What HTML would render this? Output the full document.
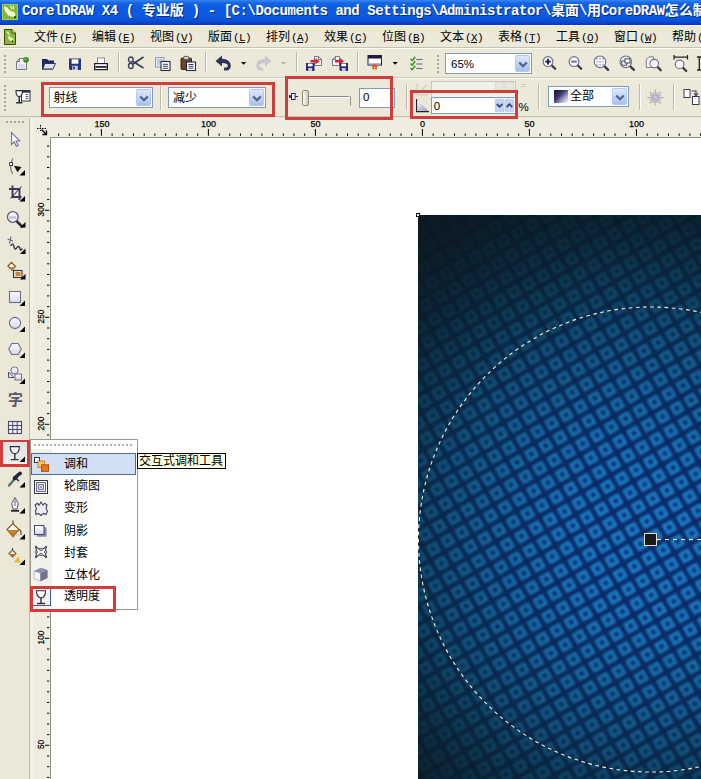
<!DOCTYPE html><html><head><meta charset="utf-8"><title>CorelDRAW X4</title><style>
*{box-sizing:border-box;margin:0;padding:0}
html,body{width:701px;height:779px;overflow:hidden;background:#ece9d8}
body{position:relative;font-family:"Liberation Sans","Noto Sans CJK SC",sans-serif;font-size:12px;color:#000}
.a{position:absolute}
.t{position:absolute;white-space:nowrap;line-height:1}
.rl{-webkit-text-stroke:0.25px #000}
.cj{font-family:"Liberation Sans","Noto Sans CJK SC",sans-serif}
#title{left:0;top:0;width:701px;height:25px;background:linear-gradient(#3a86f2 0,#1565e8 3px,#0b5be3 8px,#0b5ae0 17px,#0a4bd0 22px,#0838b8 25px)}
#title .t{color:#fff;font-family:"Liberation Mono","Noto Sans CJK SC",monospace;font-weight:bold;font-size:14px;letter-spacing:-0.42px;top:4px;left:22px;text-shadow:1px 1px 0 #0a2a80}
#title .t span{font-size:14px;letter-spacing:0}
.menu{top:31px;font-size:12px}
.menu i{font-style:normal;font-family:"Liberation Mono",monospace;font-size:11px;letter-spacing:-0.6px;margin-left:1px}
.sepv{position:absolute;width:2px;border-left:1px solid #bdbaab;border-right:1px solid #fbfaf5}
.combo{position:absolute;background:#fff;border:1px solid #7f9db9}
.dd{position:absolute;right:1px;top:1px;bottom:1px;width:15px;border-radius:2px;background:linear-gradient(#dfe8fb,#b9ccf6 70%,#a9bef0);border:1px solid #b5c7f3}
.red{position:absolute;border:3px solid #d23c3b}
.grip i{position:absolute;left:0;width:2px;height:2px;background:#aaa697}
</style></head><body>
<div id="title" class="a"><div class="t">CorelDRAW X4 ( <span>专业版</span> ) - [C:\Documents and Settings\Administrator\<span>桌面</span>\<span>用</span>CoreDRAW<span>怎么制</span></div></div>
<svg class="a" style="left:0;top:0" width="701" height="779" viewBox="0 0 701 779"><g transform="translate(2 4)"><rect width="16" height="16" fill="#86b530"/><rect x=".5" y=".5" width="15" height="15" fill="none" stroke="#a5cc55"/><path d="M2 2.5 Q5 2 6.5 5 L9 7.5 Q12 6.5 13 9.5 L13.5 13.5 L10 12.5 Q6 12.5 5 9.5 Q2.5 8 2 2.5Z" fill="#f4fbd8"/><path d="M8.5 1.5 L10 5.5 M11.5 2 L11.5 5.5" stroke="#e8f5c0" stroke-width="1.3"/><circle cx="13" cy="13.2" r="1.1" fill="#1d3a0a"/></g><g transform="translate(4 29)"><path d="M.5 .5 H8 L11.5 4 V15.5 H.5Z" fill="#8ab534" stroke="#3d4a12"/><path d="M8 .5 V4 H11.5" fill="#e8f0c8" stroke="#3d4a12"/><path d="M2 2.5 L5 6 L4 9 Q5 12 8 12.5 L10 13.5 L9.5 10 Q8 8 6 8 L4.5 3Z" fill="#eef8cc"/><circle cx="8.6" cy="12.2" r="1" fill="#1d3a0a"/></g></svg>
<div class="a" style="left:0;top:25px;width:701px;height:1px;background:#fbfaf6"></div>
<div class="t menu" style="left:34px">文件<i>(<u>F</u>)</i></div>
<div class="t menu" style="left:92px">编辑<i>(<u>E</u>)</i></div>
<div class="t menu" style="left:150px">视图<i>(<u>V</u>)</i></div>
<div class="t menu" style="left:208px">版面<i>(<u>L</u>)</i></div>
<div class="t menu" style="left:266px">排列<i>(<u>A</u>)</i></div>
<div class="t menu" style="left:324px">效果<i>(<u>C</u>)</i></div>
<div class="t menu" style="left:382px">位图<i>(<u>B</u>)</i></div>
<div class="t menu" style="left:440px">文本<i>(<u>X</u>)</i></div>
<div class="t menu" style="left:498px">表格<i>(<u>T</u>)</i></div>
<div class="t menu" style="left:556px">工具<i>(<u>O</u>)</i></div>
<div class="t menu" style="left:614px">窗口<i>(<u>W</u>)</i></div>
<div class="t menu" style="left:672px">帮助<i>(<u>H</u>)</i></div>

<div class="a" style="left:0;top:47px;width:701px;height:1px;background:#c5c2b2"></div>
<div class="a" style="left:0;top:48px;width:701px;height:1px;background:#fbfaf5"></div>
<div class="a grip" style="left:4px;top:55px"><i style="top:0px"></i><i style="top:4px"></i><i style="top:8px"></i><i style="top:12px"></i><i style="top:16px"></i></div>
<div class="sepv" style="left:118px;top:52px;height:20px"></div>
<div class="sepv" style="left:204.5px;top:52px;height:20px"></div>
<div class="sepv" style="left:296px;top:52px;height:20px"></div>
<div class="sepv" style="left:357px;top:52px;height:20px"></div>
<div class="a grip" style="left:437px;top:55px"><i style="top:0px"></i><i style="top:4px"></i><i style="top:8px"></i><i style="top:12px"></i><i style="top:16px"></i></div>
<div class="combo" style="left:445px;top:53px;width:87px;height:21px"><div class="t" style="left:5px;top:4.5px;font-size:11.5px">65%</div><div class="dd"><svg class="a" style="left:2px;top:5px" width="10" height="8" viewBox="0 0 10 8"><path d="M1.2 1.5 L5 5.3 L8.8 1.5" fill="none" stroke="#4d6185" stroke-width="2.2"/></svg></div></div>
<svg class="a" style="left:0;top:0" width="701" height="779" viewBox="0 0 701 779"><g transform="translate(16 58)"><path d="M.5 3.5 L3.5 .5 H10.5 V11.5 H.5Z" fill="#f2f2f4" stroke="#77778a"/><path d="M.5 3.5 H3.5 V.5" fill="none" stroke="#77778a"/><rect x="2" y="6" width="7" height="5" fill="#dcdce4"/><circle cx="10" cy="1.8" r="2.9" fill="#3b8f2e"/><circle cx="9.4" cy="1.2" r="1" fill="#7cc86a"/></g><g transform="translate(42 58)"><path d="M0 1 H5 L6.5 2.5 H12 V5 H0Z" fill="#1f2b5e"/><path d="M0 4 V11.5 H11 V4Z" fill="#1f2b5e"/><path d="M2.8 5.5 H13.5 L11 11 H.8Z" fill="#dfe2ee" stroke="#1f2b5e" stroke-width=".9"/></g><g transform="translate(69 58.5)"><path d="M0 0 H12 V11.5 H1.2 L0 10.3Z" fill="#2a3478"/><rect x="2.6" y=".8" width="6.8" height="4.4" fill="#fff"/><rect x="3.2" y="7.2" width="5.6" height="4.3" fill="#c9cde6"/><rect x="4.2" y="8" width="1.6" height="2.8" fill="#2a3478"/></g><g transform="translate(94 57.5)"><rect x="3.5" y=".5" width="7" height="6.5" fill="#fff" stroke="#8a8a9a"/><rect x=".6" y="6.1" width="12.8" height="6" fill="#fff" stroke="#1c1c2a" stroke-width="1.2"/><rect x="1.2" y="8.6" width="11.6" height="1.7" fill="#1c1c2a"/><rect x="2.5" y="6.7" width="9" height="1.2" fill="#d8d8e0"/></g><g transform="translate(128 56)"><path d="M5 8 L15.5 1 M5 5.5 L15.5 12" stroke="#3b3f62" stroke-width="1.7" fill="none"/><ellipse cx="2.8" cy="3.6" rx="2.3" ry="2.6" fill="none" stroke="#3b3f62" stroke-width="1.4"/><ellipse cx="2.8" cy="9.9" rx="2.3" ry="2.6" fill="none" stroke="#3b3f62" stroke-width="1.4"/></g><g transform="translate(155 57)"><rect x=".5" y=".5" width="8.5" height="9.5" fill="#dfe6f6" stroke="#8b9cc4"/><path d="M2 3H7.5M2 5H7.5M2 7H5" stroke="#8b9cc4" stroke-width=".8"/><rect x="6" y="4.5" width="9" height="9" fill="#fff" stroke="#262a48" stroke-width="1.1"/><path d="M8 7.3H13M8 9.3H13M8 11.3H13" stroke="#262a48" stroke-width=".9"/></g><g transform="translate(180.5 56)"><rect x=".5" y="2" width="10.5" height="11.5" rx="1" fill="#6a4626" stroke="#3c2814"/><rect x="3.2" y=".4" width="5" height="3" rx="1" fill="#d8d8e0" stroke="#555"/><rect x="6" y="6" width="9" height="8.5" fill="#fff" stroke="#262a48" stroke-width="1.1"/><path d="M8 8.5H13M8 10.3H13M8 12.2H13" stroke="#262a48" stroke-width=".9"/></g><g transform="translate(215.5 55.5)"><path d="M0 5.5 L6.5 0 V3.3 C11.5 3.3 15.3 6.2 15.3 10.3 C15.3 13.2 13.3 15 10.8 15 H8.6 V12 H10.4 C11.7 12 12.3 11.3 12.3 10.2 C12.3 8.6 10.5 7.6 6.5 7.6 V11Z" fill="#2c3060"/></g><path d="M241 62 h5.2 l-2.6 2.8z" fill="#000"/><g transform="translate(271.5 55.5)"><g transform="scale(-1 1)"><path d="M0 5.5 L6.5 0 V3.3 C11.5 3.3 15.3 6.2 15.3 10.3 C15.3 13.2 13.3 15 10.8 15 H8.6 V12 H10.4 C11.7 12 12.3 11.3 12.3 10.2 C12.3 8.6 10.5 7.6 6.5 7.6 V11Z" fill="#c6c6ce"/></g></g><path d="M281 62 h5.2 l-2.6 2.8z" fill="#b4b4b4"/><g transform="translate(306 56)"><path d="M8.5 .5 H12.5 L15.5 3.5 V9.5 H8.5Z" fill="#f4f4f8" stroke="#77778a"/><path d="M12.5 .5 V3.5 H15.5" fill="none" stroke="#77778a"/><path d="M4.5 4 H9.5 V2 L13.5 5.2 L9.5 8.4 V6.4 H4.5Z" fill="#d8262c"/><g transform="translate(0 7)"><path d="M0 0 H8.5 V8 H.9 L0 7.1Z" fill="#23296a"/><rect x="1.8" y=".6" width="4.8" height="2.8" fill="#fff"/><rect x="2.2" y="5" width="4" height="3" fill="#c4c8e2"/></g></g><g transform="translate(332 56)"><path d="M.5 3.5 L3.5 .5 H7.5 V9.5 H.5Z" fill="#f4f4f8" stroke="#77778a"/><path d="M.5 3.5 H3.5 V.5" fill="none" stroke="#77778a"/><path d="M3 4 H8 V2 L12 5.2 L8 8.4 V6.4 H3Z" fill="#d8262c"/><g transform="translate(7.5 7)"><path d="M0 0 H8.5 V8 H.9 L0 7.1Z" fill="#23296a"/><rect x="1.8" y=".6" width="4.8" height="2.8" fill="#fff"/><rect x="2.2" y="5" width="4" height="3" fill="#c4c8e2"/></g></g><g transform="translate(367.5 55)"><rect x=".5" y=".5" width="13.5" height="9.5" fill="#fff" stroke="#1c1c3c"/><rect x=".5" y=".5" width="13.5" height="3" fill="#1c1c3c"/><rect x="1" y="8.3" width="12.5" height="1.5" fill="#9a9ab8"/><path d="M7.2 9 L10.5 12.2 L9 12.5 L9.3 15 L7.2 13.8 L5.1 15 L5.4 12.5 L3.9 12.2Z" fill="#e8481c"/><path d="M7.2 11 L8.4 12.6 L7.2 14 L6 12.6Z" fill="#ffb534"/></g><path d="M392.6 62 h5.2 l-2.6 2.8z" fill="#000"/><g transform="translate(410 56)"><path d="M.5 3.0 L2.2 4.7 L5.2 0.7" fill="none" stroke="#3a9030" stroke-width="1.5"/><path d="M6.2 3.5 H12.5" stroke="#6a6a82" stroke-width="1.1"/><path d="M.5 7.5 L2.2 9.2 L5.2 5.2" fill="none" stroke="#3a9030" stroke-width="1.5"/><path d="M6.2 8 H12.5" stroke="#6a6a82" stroke-width="1.1"/><path d="M.5 12.0 L2.2 13.7 L5.2 9.7" fill="none" stroke="#3a9030" stroke-width="1.5"/><path d="M6.2 12.5 H12.5" stroke="#6a6a82" stroke-width="1.1"/></g><path d="M551.43 65.03 L555.1999999999999 68.8" stroke="#3a3844" stroke-width="2.3" stroke-linecap="round"/><circle cx="548" cy="61.6" r="4.9" fill="#f8f8fc" stroke="#6e6e8c" stroke-width="1.15"/><path d="M545.2 61.6 h5.6 M548 58.8 v5.6" stroke="#1c2050" stroke-width="1.9"/><path d="M577.43 65.03 L581.1999999999999 68.8" stroke="#3a3844" stroke-width="2.3" stroke-linecap="round"/><circle cx="574" cy="61.6" r="4.9" fill="#f8f8fc" stroke="#6e6e8c" stroke-width="1.15"/><path d="M571.2 61.6 h5.6" stroke="#6a6a8a" stroke-width="1.9"/><path d="M604.06 65.86 L608.0999999999999 69.89999999999999" stroke="#3a3844" stroke-width="2.3" stroke-linecap="round"/><circle cx="600" cy="61.8" r="5.8" fill="#f8f8fc" stroke="#6e6e8c" stroke-width="1.15"/><rect x="596.5" y="58.3" width="1.1" height="1.1" fill="#5a5a78"/><rect x="596.5" y="61.3" width="1.1" height="1.1" fill="#5a5a78"/><rect x="596.5" y="64.3" width="1.1" height="1.1" fill="#5a5a78"/><rect x="599.5" y="58.3" width="1.1" height="1.1" fill="#5a5a78"/><rect x="599.5" y="61.3" width="1.1" height="1.1" fill="#5a5a78"/><rect x="599.5" y="64.3" width="1.1" height="1.1" fill="#5a5a78"/><rect x="602.5" y="58.3" width="1.1" height="1.1" fill="#5a5a78"/><rect x="602.5" y="61.3" width="1.1" height="1.1" fill="#5a5a78"/><rect x="602.5" y="64.3" width="1.1" height="1.1" fill="#5a5a78"/><path d="M629.8599999999999 65.86 L633.8999999999999 69.89999999999999" stroke="#3a3844" stroke-width="2.3" stroke-linecap="round"/><circle cx="625.8" cy="61.8" r="5.8" fill="#f8f8fc" stroke="#6e6e8c" stroke-width="1.15"/><rect x="621.8" y="61" width="5" height="4.2" fill="#fff" stroke="#33334f" stroke-width=".9"/><rect x="625" y="58.8" width="5" height="4.2" fill="#fff" stroke="#33334f" stroke-width=".9"/><path d="M646.3 59.5 L649 56.8 H653.5 V67.5 H646.3Z" fill="#f2f2f6" stroke="#6e6e88" stroke-width=".9"/><path d="M657.21 66.61 L660.8 70.2" stroke="#3a3844" stroke-width="2.3" stroke-linecap="round"/><circle cx="654.2" cy="63.6" r="4.3" fill="#f8f8fc" stroke="#6e6e8c" stroke-width="1.15"/><path d="M674 57.2 H687.5 M674 55 V59.4 M687.5 55 V59.4" stroke="#222" stroke-width="1.2"/><path d="M682.61 67.41000000000001 L686.1999999999999 71.0" stroke="#3a3844" stroke-width="2.3" stroke-linecap="round"/><circle cx="679.6" cy="64.4" r="4.3" fill="#f8f8fc" stroke="#6e6e8c" stroke-width="1.15"/><path d="M699.3 57 V70 M697 57 H701 M697 70 H701" stroke="#222" stroke-width="1.3"/></svg>
<div class="a" style="left:0;top:77px;width:701px;height:1px;background:#cfccbd"></div>
<div class="a" style="left:0;top:78px;width:701px;height:1px;background:#fbfaf5"></div>
<div class="a grip" style="left:4px;top:85px"><i style="top:0px"></i><i style="top:4px"></i><i style="top:8px"></i><i style="top:12px"></i><i style="top:16px"></i><i style="top:20px"></i><i style="top:24px"></i></div>
<div class="combo" style="left:48.5px;top:86.5px;width:104px;height:21.5px"><div class="t" style="left:4px;top:4px">射线</div><div class="dd"><svg class="a" style="left:2px;top:5px" width="10" height="8" viewBox="0 0 10 8"><path d="M1.2 1.5 L5 5.3 L8.8 1.5" fill="none" stroke="#4d6185" stroke-width="2.2"/></svg></div></div>
<div class="sepv" style="left:159.5px;top:84px;height:26px"></div>
<div class="combo" style="left:168px;top:86.5px;width:97.8px;height:21.5px"><div class="t" style="left:4px;top:4px">减少</div><div class="dd"><svg class="a" style="left:2px;top:5px" width="10" height="8" viewBox="0 0 10 8"><path d="M1.2 1.5 L5 5.3 L8.8 1.5" fill="none" stroke="#4d6185" stroke-width="2.2"/></svg></div></div>
<div class="a" style="left:308px;top:96px;width:41px;height:1px;background:#8a8a86"></div><div class="a" style="left:308px;top:97px;width:41px;height:1px;background:#fff"></div>
<div class="a" style="left:350px;top:96px;width:1px;height:10px;background:#9a9a96"></div>
<div class="a" style="left:301.5px;top:90px;width:7px;height:16px;border:1px solid #8a8c7c;border-radius:2px;background:linear-gradient(90deg,#fff,#e0decf 60%,#c8c6b4)"></div>
<div class="combo" style="left:359px;top:88px;width:36px;height:19.6px"><div class="t" style="left:3px;top:3px;font-size:11.5px">0</div></div>
<div class="sepv" style="left:406px;top:84px;height:26px"></div>
<div class="combo" style="left:431px;top:81px;width:84.5px;height:17px;border-color:#c3c8d0;background:#f3f2ea"></div>
<div class="combo" style="left:431px;top:97px;width:84.5px;height:17px;border-color:#7f9db9"><div class="t" style="left:1.8px;top:2.8px;font-size:11.5px">0</div></div>
<div class="t" style="left:518.5px;top:101.5px;font-size:11.5px">%</div>
<div class="sepv" style="left:538px;top:84px;height:26px"></div>
<div class="combo" style="left:548px;top:86px;width:81px;height:21px"><div class="a" style="left:5px;top:3px;width:14px;height:13px;background:linear-gradient(135deg,#15103a 0,#3a3568 40%,#b8b4d8 75%,#fff 100%)"></div><div class="t" style="left:21px;top:3px">全部</div><div class="dd"><svg class="a" style="left:2px;top:5px" width="10" height="8" viewBox="0 0 10 8"><path d="M1.2 1.5 L5 5.3 L8.8 1.5" fill="none" stroke="#4d6185" stroke-width="2.2"/></svg></div></div>
<div class="sepv" style="left:638.5px;top:84px;height:26px"></div>
<div class="sepv" style="left:673px;top:84px;height:26px"></div>
<svg class="a" style="left:0;top:0" width="701" height="779" viewBox="0 0 701 779"><g transform="translate(15 90)"><rect x="6.5" y=".5" width="8.5" height="10.5" fill="#fff" stroke="#33334a"/><rect x="6.5" y=".5" width="8.5" height="2.2" fill="#33334a"/><path d="M10.5 4.6H13.3M10.5 6.6H13.3M10.5 8.6H13.3" stroke="#55556e" stroke-width="1"/><path d="M1 .6 H7.4 C7.6 4.2 6.3 6.3 4.2 6.8 C2.1 6.3 .8 4.2 1 .6Z" fill="#f6f6fa" stroke="#26263a" stroke-width="1.1"/><path d="M4.2 6.8 V12.3 M1.2 12.8 H7.4" stroke="#26263a" stroke-width="1.4"/></g><g transform="translate(289 92)"><path d="M0 4.5 H9" stroke="#2a2a5a" stroke-width="1"/><rect x="2.5" y="1.5" width="3.6" height="6" fill="#fff" stroke="#2a2a5a"/><rect x="0" y="3" width="1.6" height="3" fill="#2a2a5a"/></g><path d="M417 95 V83.5 M417 95 H428 M419 93 L427 84.5" stroke="#cfcdc0" stroke-width="1.2" fill="none"/><defs><linearGradient id="tg" x1="0" y1="0" x2="1" y2="1"><stop offset="0" stop-color="#fff"/><stop offset=".5" stop-color="#c9c9dc"/><stop offset="1" stop-color="#8d8db0"/></linearGradient></defs><path d="M416.6 99 V111.6 H429" fill="none" stroke="#222238" stroke-width="1.2"/><path d="M417.6 100.5 L428.2 110.8 H417.6Z" fill="url(#tg)"/><rect x="495.2" y="99.2" width="8.8" height="12.6" rx="1" fill="#c6d4f4" stroke="#aebfe8" stroke-width=".6"/><rect x="505" y="99.2" width="8.8" height="12.6" rx="1" fill="#c6d4f4" stroke="#aebfe8" stroke-width=".6"/><path d="M496.8 104 L499.6 106.8 L502.4 104" fill="none" stroke="#33477a" stroke-width="1.8"/><path d="M506.6 107 L509.4 104.2 L512.2 107" fill="none" stroke="#33477a" stroke-width="1.8"/><rect x="495.2" y="82.5" width="8.8" height="7" fill="#e9e7dc" stroke="#d6d4c8" stroke-width=".6"/><rect x="505" y="82.5" width="8.8" height="7" fill="#e9e7dc" stroke="#d6d4c8" stroke-width=".6"/><path d="M521 84.5 h5 M521 86.5 h5" stroke="#cfcdc0" stroke-width="1"/><path d="M655.3 97.6 L663.3 97.6" stroke="#a9a9b9" stroke-width="1.1"/><path d="M655.3 97.6 L660.8 99.9" stroke="#a9a9b9" stroke-width="1.1"/><path d="M655.3 97.6 L661.0 103.3" stroke="#a9a9b9" stroke-width="1.1"/><path d="M655.3 97.6 L657.6 103.1" stroke="#a9a9b9" stroke-width="1.1"/><path d="M655.3 97.6 L655.3 105.6" stroke="#a9a9b9" stroke-width="1.1"/><path d="M655.3 97.6 L653.0 103.1" stroke="#a9a9b9" stroke-width="1.1"/><path d="M655.3 97.6 L649.6 103.3" stroke="#a9a9b9" stroke-width="1.1"/><path d="M655.3 97.6 L649.8 99.9" stroke="#a9a9b9" stroke-width="1.1"/><path d="M655.3 97.6 L647.3 97.6" stroke="#a9a9b9" stroke-width="1.1"/><path d="M655.3 97.6 L649.8 95.3" stroke="#a9a9b9" stroke-width="1.1"/><path d="M655.3 97.6 L649.6 91.9" stroke="#a9a9b9" stroke-width="1.1"/><path d="M655.3 97.6 L653.0 92.1" stroke="#a9a9b9" stroke-width="1.1"/><path d="M655.3 97.6 L655.3 89.6" stroke="#a9a9b9" stroke-width="1.1"/><path d="M655.3 97.6 L657.6 92.1" stroke="#a9a9b9" stroke-width="1.1"/><path d="M655.3 97.6 L661.0 91.9" stroke="#a9a9b9" stroke-width="1.1"/><path d="M655.3 97.6 L660.8 95.3" stroke="#a9a9b9" stroke-width="1.1"/><circle cx="655.3" cy="97.6" r="2.2" fill="#c5c5d0"/><g transform="translate(683.5 88)"><rect x=".5" y="1.5" width="6" height="8" fill="#fff" stroke="#3a3a55"/><rect x="9" y="8.5" width="6.5" height="8" fill="#fff" stroke="#3a3a55"/><path d="M8 3 H12.5 V7" fill="none" stroke="#3a3a55" stroke-width="1.1"/><path d="M10.6 5.4 L12.5 7.6 L14.4 5.4" fill="none" stroke="#3a3a55" stroke-width="1.1"/></g></svg>
<div class="a" style="left:0;top:116px;width:701px;height:1px;background:#c2bfb0"></div>
<div class="a" style="left:0;top:118px;width:29px;height:661px;background:#ebe8d7"></div>
<div class="a" style="left:29px;top:118px;width:1px;height:661px;background:#bdb9a8"></div>
<div class="a" style="left:30px;top:118px;width:3px;height:661px;background:#f3f1e6"></div>
<div class="a grip" style="left:6px;top:121px"><i style="left:0px;top:0"></i><i style="left:4px;top:0"></i><i style="left:8px;top:0"></i><i style="left:12px;top:0"></i><i style="left:16px;top:0"></i></div>
<div class="a" style="left:33px;top:118px;width:668px;height:19px;background:#efede0"></div>
<div class="a" style="left:33px;top:137px;width:18px;height:642px;background:#efede0"></div>
<div class="a" style="left:50.4px;top:136.6px;width:651px;height:643px;background:#fff;border-left:1px solid #8f8f88;border-top:1px solid #8f8f88"></div>
<svg class="a" style="left:0;top:118px" width="701" height="661" viewBox="0 118 701 661" ><rect x="58.1" y="133.4" width="1" height="2.4" fill="#000"/><rect x="68.8" y="133.4" width="1" height="2.4" fill="#000"/><rect x="79.5" y="133.4" width="1" height="2.4" fill="#000"/><rect x="90.2" y="133.4" width="1" height="2.4" fill="#000"/><rect x="100.9" y="129" width="1" height="6.8" fill="#000"/><rect x="111.6" y="133.4" width="1" height="2.4" fill="#000"/><rect x="122.3" y="133.4" width="1" height="2.4" fill="#000"/><rect x="133.0" y="133.4" width="1" height="2.4" fill="#000"/><rect x="143.7" y="133.4" width="1" height="2.4" fill="#000"/><rect x="154.4" y="133.4" width="1" height="2.4" fill="#000"/><rect x="165.1" y="133.4" width="1" height="2.4" fill="#000"/><rect x="175.8" y="133.4" width="1" height="2.4" fill="#000"/><rect x="186.5" y="133.4" width="1" height="2.4" fill="#000"/><rect x="197.2" y="133.4" width="1" height="2.4" fill="#000"/><rect x="207.9" y="129" width="1" height="6.8" fill="#000"/><rect x="218.6" y="133.4" width="1" height="2.4" fill="#000"/><rect x="229.3" y="133.4" width="1" height="2.4" fill="#000"/><rect x="240.0" y="133.4" width="1" height="2.4" fill="#000"/><rect x="250.7" y="133.4" width="1" height="2.4" fill="#000"/><rect x="261.4" y="133.4" width="1" height="2.4" fill="#000"/><rect x="272.1" y="133.4" width="1" height="2.4" fill="#000"/><rect x="282.8" y="133.4" width="1" height="2.4" fill="#000"/><rect x="293.5" y="133.4" width="1" height="2.4" fill="#000"/><rect x="304.2" y="133.4" width="1" height="2.4" fill="#000"/><rect x="314.9" y="129" width="1" height="6.8" fill="#000"/><rect x="325.6" y="133.4" width="1" height="2.4" fill="#000"/><rect x="336.3" y="133.4" width="1" height="2.4" fill="#000"/><rect x="347.0" y="133.4" width="1" height="2.4" fill="#000"/><rect x="357.7" y="133.4" width="1" height="2.4" fill="#000"/><rect x="368.4" y="133.4" width="1" height="2.4" fill="#000"/><rect x="379.1" y="133.4" width="1" height="2.4" fill="#000"/><rect x="389.8" y="133.4" width="1" height="2.4" fill="#000"/><rect x="400.5" y="133.4" width="1" height="2.4" fill="#000"/><rect x="411.2" y="133.4" width="1" height="2.4" fill="#000"/><rect x="421.9" y="129" width="1" height="6.8" fill="#000"/><rect x="432.6" y="133.4" width="1" height="2.4" fill="#000"/><rect x="443.3" y="133.4" width="1" height="2.4" fill="#000"/><rect x="454.0" y="133.4" width="1" height="2.4" fill="#000"/><rect x="464.7" y="133.4" width="1" height="2.4" fill="#000"/><rect x="475.4" y="133.4" width="1" height="2.4" fill="#000"/><rect x="486.1" y="133.4" width="1" height="2.4" fill="#000"/><rect x="496.8" y="133.4" width="1" height="2.4" fill="#000"/><rect x="507.5" y="133.4" width="1" height="2.4" fill="#000"/><rect x="518.2" y="133.4" width="1" height="2.4" fill="#000"/><rect x="528.9" y="129" width="1" height="6.8" fill="#000"/><rect x="539.6" y="133.4" width="1" height="2.4" fill="#000"/><rect x="550.3" y="133.4" width="1" height="2.4" fill="#000"/><rect x="561.0" y="133.4" width="1" height="2.4" fill="#000"/><rect x="571.7" y="133.4" width="1" height="2.4" fill="#000"/><rect x="582.4" y="133.4" width="1" height="2.4" fill="#000"/><rect x="593.1" y="133.4" width="1" height="2.4" fill="#000"/><rect x="603.8" y="133.4" width="1" height="2.4" fill="#000"/><rect x="614.5" y="133.4" width="1" height="2.4" fill="#000"/><rect x="625.2" y="133.4" width="1" height="2.4" fill="#000"/><rect x="635.9" y="129" width="1" height="6.8" fill="#000"/><rect x="646.6" y="133.4" width="1" height="2.4" fill="#000"/><rect x="657.3" y="133.4" width="1" height="2.4" fill="#000"/><rect x="668.0" y="133.4" width="1" height="2.4" fill="#000"/><rect x="678.7" y="133.4" width="1" height="2.4" fill="#000"/><rect x="689.4" y="133.4" width="1" height="2.4" fill="#000"/><rect x="700.1" y="133.4" width="1" height="2.4" fill="#000"/><rect x="47" y="145.6" width="2.3" height="1" fill="#000"/><rect x="47" y="156.3" width="2.3" height="1" fill="#000"/><rect x="47" y="167.0" width="2.3" height="1" fill="#000"/><rect x="47" y="177.7" width="2.3" height="1" fill="#000"/><rect x="47" y="188.4" width="2.3" height="1" fill="#000"/><rect x="47" y="199.1" width="2.3" height="1" fill="#000"/><rect x="45" y="209.8" width="4.3" height="1" fill="#000"/><rect x="47" y="220.5" width="2.3" height="1" fill="#000"/><rect x="47" y="231.2" width="2.3" height="1" fill="#000"/><rect x="47" y="241.9" width="2.3" height="1" fill="#000"/><rect x="47" y="252.6" width="2.3" height="1" fill="#000"/><rect x="47" y="263.3" width="2.3" height="1" fill="#000"/><rect x="47" y="274.0" width="2.3" height="1" fill="#000"/><rect x="47" y="284.7" width="2.3" height="1" fill="#000"/><rect x="47" y="295.4" width="2.3" height="1" fill="#000"/><rect x="47" y="306.1" width="2.3" height="1" fill="#000"/><rect x="45" y="316.8" width="4.3" height="1" fill="#000"/><rect x="47" y="327.5" width="2.3" height="1" fill="#000"/><rect x="47" y="338.2" width="2.3" height="1" fill="#000"/><rect x="47" y="348.9" width="2.3" height="1" fill="#000"/><rect x="47" y="359.6" width="2.3" height="1" fill="#000"/><rect x="47" y="370.3" width="2.3" height="1" fill="#000"/><rect x="47" y="381.0" width="2.3" height="1" fill="#000"/><rect x="47" y="391.7" width="2.3" height="1" fill="#000"/><rect x="47" y="402.4" width="2.3" height="1" fill="#000"/><rect x="47" y="413.1" width="2.3" height="1" fill="#000"/><rect x="45" y="423.8" width="4.3" height="1" fill="#000"/><rect x="47" y="434.5" width="2.3" height="1" fill="#000"/><rect x="47" y="445.2" width="2.3" height="1" fill="#000"/><rect x="47" y="455.9" width="2.3" height="1" fill="#000"/><rect x="47" y="466.6" width="2.3" height="1" fill="#000"/><rect x="47" y="477.3" width="2.3" height="1" fill="#000"/><rect x="47" y="488.0" width="2.3" height="1" fill="#000"/><rect x="47" y="498.7" width="2.3" height="1" fill="#000"/><rect x="47" y="509.4" width="2.3" height="1" fill="#000"/><rect x="47" y="520.1" width="2.3" height="1" fill="#000"/><rect x="45" y="530.8" width="4.3" height="1" fill="#000"/><rect x="47" y="541.5" width="2.3" height="1" fill="#000"/><rect x="47" y="552.2" width="2.3" height="1" fill="#000"/><rect x="47" y="562.9" width="2.3" height="1" fill="#000"/><rect x="47" y="573.6" width="2.3" height="1" fill="#000"/><rect x="47" y="584.3" width="2.3" height="1" fill="#000"/><rect x="47" y="595.0" width="2.3" height="1" fill="#000"/><rect x="47" y="605.7" width="2.3" height="1" fill="#000"/><rect x="47" y="616.4" width="2.3" height="1" fill="#000"/><rect x="47" y="627.1" width="2.3" height="1" fill="#000"/><rect x="45" y="637.8" width="4.3" height="1" fill="#000"/><rect x="47" y="648.5" width="2.3" height="1" fill="#000"/><rect x="47" y="659.2" width="2.3" height="1" fill="#000"/><rect x="47" y="669.9" width="2.3" height="1" fill="#000"/><rect x="47" y="680.6" width="2.3" height="1" fill="#000"/><rect x="47" y="691.3" width="2.3" height="1" fill="#000"/><rect x="47" y="702.0" width="2.3" height="1" fill="#000"/><rect x="47" y="712.7" width="2.3" height="1" fill="#000"/><rect x="47" y="723.4" width="2.3" height="1" fill="#000"/><rect x="47" y="734.1" width="2.3" height="1" fill="#000"/><rect x="45" y="744.8" width="4.3" height="1" fill="#000"/><rect x="47" y="755.5" width="2.3" height="1" fill="#000"/><rect x="47" y="766.2" width="2.3" height="1" fill="#000"/><rect x="47" y="776.9" width="2.3" height="1" fill="#000"/></svg>
<div class="t rl" style="left:87px;width:30px;text-align:center;top:120px;font-size:9px">150</div>
<div class="t rl" style="left:193.5px;width:30px;text-align:center;top:120px;font-size:9px">100</div>
<div class="t rl" style="left:300.5px;width:30px;text-align:center;top:120px;font-size:9px">50</div>
<div class="t rl" style="left:407.4px;width:30px;text-align:center;top:120px;font-size:9px">0</div>
<div class="t rl" style="left:514.6px;width:30px;text-align:center;top:120px;font-size:9px">50</div>
<div class="t rl" style="left:621.5px;width:30px;text-align:center;top:120px;font-size:9px">100</div>
<div class="t rl" style="left:25.6px;width:30px;text-align:center;top:204.5px;font-size:9px;transform:rotate(-90deg) scale(0.92,1);transform-origin:50% 50%">300</div>
<div class="t rl" style="left:25.6px;width:30px;text-align:center;top:311.5px;font-size:9px;transform:rotate(-90deg) scale(0.92,1);transform-origin:50% 50%">250</div>
<div class="t rl" style="left:25.6px;width:30px;text-align:center;top:418.7px;font-size:9px;transform:rotate(-90deg) scale(0.92,1);transform-origin:50% 50%">200</div>
<div class="t rl" style="left:25.6px;width:30px;text-align:center;top:632.5px;font-size:9px;transform:rotate(-90deg) scale(0.92,1);transform-origin:50% 50%">100</div>
<div class="t rl" style="left:25.6px;width:30px;text-align:center;top:739.5px;font-size:9px;transform:rotate(-90deg) scale(0.92,1);transform-origin:50% 50%">50</div>
<svg class="a" style="left:0;top:0" width="701" height="779" viewBox="0 0 701 779"><g transform="translate(37 125)"><path d="M3.5 0 V6 M0 3.5 H10" stroke="#000" stroke-width="1" stroke-dasharray="1.5 1"/><path d="M4.5 4.5 L9.5 9.5 M9.5 5.5 V9.5 H5.5" stroke="#000" stroke-width="1.3" fill="none"/></g></svg>
<svg class="a" style="left:418px;top:215px" width="283" height="564" viewBox="418 215 283 564"><defs>
<pattern id="pt" width="16.55" height="16.55" patternUnits="userSpaceOnUse" patternTransform="translate(634.6 566.5) rotate(-30) translate(-8.275 -8.275)">
<rect width="16.55" height="16.55" fill="#0b2a6c"/>
<rect x="2.575" y="2.575" width="11.4" height="11.4" fill="#1a7ec8"/>
<rect x="5.875" y="5.875" width="4.8" height="4.8" fill="#0a2f78"/>
</pattern>
<radialGradient id="rg" gradientUnits="userSpaceOnUse" cx="650" cy="539" r="400">
<stop offset="0.000" stop-color="#06262c" stop-opacity="0"/>
<stop offset="0.150" stop-color="#06262c" stop-opacity="0.04"/>
<stop offset="0.250" stop-color="#06262c" stop-opacity="0.1"/>
<stop offset="0.375" stop-color="#06262c" stop-opacity="0.23"/>
<stop offset="0.500" stop-color="#06252b" stop-opacity="0.42"/>
<stop offset="0.580" stop-color="#07232a" stop-opacity="0.56"/>
<stop offset="0.655" stop-color="#082028" stop-opacity="0.68"/>
<stop offset="0.738" stop-color="#091c24" stop-opacity="0.8"/>
<stop offset="0.810" stop-color="#0a1a21" stop-opacity="0.875"/>
<stop offset="0.900" stop-color="#0b181f" stop-opacity="0.935"/>
<stop offset="1.000" stop-color="#0c171e" stop-opacity="0.975"/>
</radialGradient>
<filter id="bl"><feGaussianBlur stdDeviation="0.8"/></filter>
</defs><rect x="410" y="205" width="300" height="580" fill="url(#pt)" filter="url(#bl)"/><rect x="418" y="215" width="283" height="564" fill="url(#rg)"/><circle cx="651" cy="539.5" r="232.5" fill="none" stroke="#0a1424" stroke-opacity="0.55" stroke-width="1"/><circle cx="651" cy="539.5" r="232.5" fill="none" stroke="#f6f6dc" stroke-width="1.1" stroke-dasharray="3.7 3.5"/><line x1="657" y1="539.5" x2="701" y2="539.5" stroke="#223" stroke-opacity="0.5" stroke-width="1"/><line x1="657" y1="539.5" x2="701" y2="539.5" stroke="#f0f0e0" stroke-width="1" stroke-dasharray="4 4"/><rect x="644.5" y="533.5" width="12" height="12" fill="#1a1a1a" stroke="#e8dcc8" stroke-width="1"/></svg>
<div class="a" style="left:416px;top:213px;width:4px;height:4px;border:1px solid #000;background:#fff"></div>
<div class="red" style="left:41px;top:82px;width:234px;height:34.8px"></div>
<div class="red" style="left:285px;top:76px;width:107.8px;height:43.6px"></div>
<div class="red" style="left:410.4px;top:90.1px;width:107.4px;height:28.7px"></div>
<div class="a" style="left:30px;top:439px;width:108px;height:171px;background:#fff;border:1px solid #9d9a8c"></div>
<div class="a" style="left:31px;top:449px;width:21px;height:160px;background:#f3f2ea"></div>
<div class="a grip" style="left:34px;top:444px"><i style="left:0px;top:0;background:#b5b2a4"></i><i style="left:4px;top:0;background:#b5b2a4"></i><i style="left:8px;top:0;background:#b5b2a4"></i><i style="left:12px;top:0;background:#b5b2a4"></i><i style="left:16px;top:0;background:#b5b2a4"></i><i style="left:20px;top:0;background:#b5b2a4"></i><i style="left:24px;top:0;background:#b5b2a4"></i><i style="left:28px;top:0;background:#b5b2a4"></i><i style="left:32px;top:0;background:#b5b2a4"></i><i style="left:36px;top:0;background:#b5b2a4"></i><i style="left:40px;top:0;background:#b5b2a4"></i><i style="left:44px;top:0;background:#b5b2a4"></i><i style="left:48px;top:0;background:#b5b2a4"></i><i style="left:52px;top:0;background:#b5b2a4"></i><i style="left:56px;top:0;background:#b5b2a4"></i><i style="left:60px;top:0;background:#b5b2a4"></i><i style="left:64px;top:0;background:#b5b2a4"></i><i style="left:68px;top:0;background:#b5b2a4"></i><i style="left:72px;top:0;background:#b5b2a4"></i><i style="left:76px;top:0;background:#b5b2a4"></i><i style="left:80px;top:0;background:#b5b2a4"></i><i style="left:84px;top:0;background:#b5b2a4"></i><i style="left:88px;top:0;background:#b5b2a4"></i><i style="left:92px;top:0;background:#b5b2a4"></i><i style="left:96px;top:0;background:#b5b2a4"></i></div>
<div class="a" style="left:30.5px;top:453px;width:105.3px;height:21.6px;background:#d3dff3;border:1px solid #4a6c9f"></div>
<div class="t" style="left:64px;top:457.9px;font-size:12px">调和</div>
<div class="t" style="left:64px;top:480.4px;font-size:12px">轮廓图</div>
<div class="t" style="left:64px;top:502.0px;font-size:12px">变形</div>
<div class="t" style="left:64px;top:524.5px;font-size:12px">阴影</div>
<div class="t" style="left:64px;top:546.7px;font-size:12px">封套</div>
<div class="t" style="left:64px;top:568.7px;font-size:12px">立体化</div>
<div class="t" style="left:64px;top:590.2px;font-size:12px">透明度</div>
<div class="a" style="left:32px;top:587px;width:19px;height:19px;border:1px solid #4a5a8a;background:#f4f4f4"></div>
<svg class="a" style="left:0;top:0" width="701" height="779" viewBox="0 0 701 779"><rect x="34.5" y="457.5" width="5" height="5" fill="#fff" stroke="#33334a" stroke-width="1"/><rect x="38" y="461" width="6.5" height="6.5" fill="#f6c676" stroke="#c8862e" stroke-width="1"/><rect x="41.5" y="464.8" width="7" height="6.6" fill="#e8741c" stroke="#b4500c" stroke-width="1"/><rect x="34.5" y="480.5" width="13" height="13" fill="#fff" stroke="#33334a" stroke-width="1"/><rect x="36.6" y="482.6" width="8.8" height="8.8" fill="none" stroke="#55557a" stroke-width="1"/><rect x="38.7" y="484.7" width="4.6" height="4.6" fill="none" stroke="#55557a" stroke-width="1"/><rect x="40.3" y="486.3" width="1.4" height="1.4" fill="#33334a"/><path d="M35 505 L37.5 503.2 L39 505.2 L41 502 L43 505.2 L44.8 503.2 L47 505 L46 508.5 L47.5 511 L46 514.5 L43.5 513.5 L41 515.5 L38.5 513.5 L36 514.5 L35.5 511 L36.5 508.5Z" fill="#eeeef6" stroke="#44445f" stroke-width="1.1"/><rect x="36.8" y="527.3" width="9.8" height="9.4" fill="#8a8ab0"/><rect x="34.5" y="525.5" width="9.5" height="9" fill="url(#lg1)" stroke="#44446a" stroke-width="1"/><path d="M35.5 546 Q38.5 549.5 41 549.5 Q43.5 549.5 46.5 546 Q44.5 552 46.5 558 Q43.5 554.5 41 554.5 Q38.5 554.5 35.5 558 Q37.5 552 35.5 546Z" fill="none" stroke="#33334a" stroke-width="1.1"/><circle cx="41" cy="549.5" r="1.2" fill="#fff" stroke="#33334a" stroke-width=".8"/><circle cx="41" cy="554.5" r="1.2" fill="#fff" stroke="#33334a" stroke-width=".8"/><circle cx="36.3" cy="552" r="1.2" fill="#fff" stroke="#33334a" stroke-width=".8"/><circle cx="45.7" cy="552" r="1.2" fill="#fff" stroke="#33334a" stroke-width=".8"/><path d="M34 571 L41 567.7 L47.5 570 V578 L41 581.3 L34 578.5Z" fill="#b9b9cf"/><path d="M34 571 L41 567.7 L47.5 570 L40.5 573.2Z" fill="#8d8dad"/><path d="M34 571 L40.5 573.2 V581.2 L34 578.5Z" fill="#f3f3f9" stroke="#9a9ab2" stroke-width=".6"/><path d="M40.5 573.2 L47.5 570 V578 L40.5 581.2Z" fill="#71718f"/><path d="M36.5 590.8 H45.5 C45.7 595 44 597.4 41 598 C38 597.4 36.3 595 36.5 590.8Z" fill="#fff" stroke="#2c2c40" stroke-width="1.1"/><path d="M41 598 V603 M37 603.5 H45" stroke="#2c2c40" stroke-width="1.4"/></svg>
<div class="red" style="left:29.5px;top:586px;width:86px;height:25.5px"></div>
<div class="a" style="left:0;top:440px;width:30px;height:26px;background:linear-gradient(#e2e2e0,#e8e8e6 60%,#f6f6f4)"></div>
<svg class="a" style="left:0;top:0" width="701" height="779" viewBox="0 0 701 779"><path d="M11.5 132.5 V144.5 L14.3 141.8 L16.3 146.3 L18.2 145.4 L16.2 141 H19.8Z" fill="#fbfbff" stroke="#74749c" stroke-width="1.1"/><path d="M13 158.5 Q8.5 166 12.5 174" fill="none" stroke="#77778f" stroke-width="1.2"/><rect x="9.6" y="162.6" width="3" height="3" fill="#fff" stroke="#33334a" stroke-width=".9"/><path d="M14 165.8 L21.5 167 L17.5 172.3Z" fill="#111"/><path d="M25 170.0 L25 175.5 L19.5 175.5 Z" fill="#000"/><path d="M12.5 185.5 V197 H21.5 M9 189 H19.5 V200" fill="none" stroke="#3b3760" stroke-width="1.9"/><path d="M10.5 198.5 L21.5 186.5" stroke="#3b3760" stroke-width="1.1"/><path d="M25 196.0 L25 201.5 L19.5 201.5 Z" fill="#000"/><path d="M16.5 221 L22 226.5" stroke="#33303c" stroke-width="2.6" stroke-linecap="round"/><circle cx="12.8" cy="217" r="5.4" fill="#f4f4fa" stroke="#5c5c7c" stroke-width="1.3"/><path d="M9.3 217.5 h7" stroke="#b9b9d0" stroke-width="2"/><path d="M25.5 222.0 L25.5 227.5 L20.0 227.5 Z" fill="#000"/><path d="M7.5 239 L13 241 M11 236.5 L9.5 243.5" stroke="#66668a" stroke-width="1.1"/><path d="M10.5 246 Q13 242 14 246.5 Q15 251 17 247.5 Q19 244.5 20.5 250 L22.5 249" fill="none" stroke="#33334f" stroke-width="1.4"/><path d="M25.5 248.5 L25.5 254 L20.0 254 Z" fill="#000"/><path d="M8 266 L11.5 262.5 L15.5 266.5 L12 270Z" fill="#fff" stroke="#8a5a20" stroke-width="1.3"/><path d="M9.5 267.5 L12 270 L15.5 266.5Z" fill="#c9863a"/><rect x="13.5" y="270.5" width="8.5" height="7" fill="none" stroke="#33334a" stroke-width="1.1"/><rect x="15.5" y="272" width="5" height="4" fill="#c9863a"/><path d="M25.5 274.0 L25.5 279.5 L20.0 279.5 Z" fill="#000"/><defs><linearGradient id="lg1" x1="0" y1="0" x2="0" y2="1"><stop offset="0" stop-color="#fff"/><stop offset="1" stop-color="#d6d6ea"/></linearGradient></defs><rect x="9.5" y="291.5" width="11" height="11" fill="url(#lg1)" stroke="#6e6e92" stroke-width="1.1"/><path d="M25 300.5 L25 306 L19.5 306 Z" fill="#000"/><circle cx="15" cy="323" r="5.6" fill="url(#lg1)" stroke="#6e6e92" stroke-width="1.1"/><path d="M25 326.5 L25 332 L19.5 332 Z" fill="#000"/><path d="M8.7 349 L11.8 343.5 H18.2 L21.3 349 L18.2 354.5 H11.8Z" fill="url(#lg1)" stroke="#6e6e92" stroke-width="1.1"/><path d="M25 352.5 L25 358 L19.5 358 Z" fill="#000"/><path d="M8.5 377.5 V372 L14 377.5Z" fill="#e8e8f4" stroke="#4c4c6c" stroke-width="1"/><circle cx="14.5" cy="370.5" r="3.6" fill="url(#lg1)" stroke="#6e6e92" stroke-width="1"/><rect x="15" y="374" width="6.5" height="6" fill="url(#lg1)" stroke="#6e6e92" stroke-width="1"/><path d="M25 378.5 L25 384 L19.5 384 Z" fill="#000"/><rect x="8.5" y="421.5" width="13" height="12" fill="#eeeefa" stroke="#4c4870" stroke-width="1.1"/><path d="M8.5 425.5 H21.5 M8.5 429.5 H21.5 M12.8 421.5 V433.5 M17.2 421.5 V433.5" stroke="#4c4870" stroke-width="1"/><path d="M10.3 446.6 H19.3 C19.5 450.8 17.8 453.2 14.8 453.8 C11.8 453.2 10.1 450.8 10.3 446.6Z" fill="#f4f4f8" stroke="#2c2c40" stroke-width="1.1"/><path d="M14.8 453.8 V459.2 M10.8 459.6 H18.8" stroke="#2c2c40" stroke-width="1.4"/><path d="M25 456.5 L25 462 L19.5 462 Z" fill="#000"/><path d="M9 485.5 L16.5 476.8" stroke="#4e7a6a" stroke-width="2.4" stroke-linecap="round"/><path d="M14.5 478.5 L18 475" stroke="#222233" stroke-width="3.6" stroke-linecap="round"/><circle cx="20" cy="473.5" r="1.9" fill="#222233"/><path d="M13.8 476 L18.8 481" stroke="#222233" stroke-width="1.6"/><path d="M25 482.0 L25 487.5 L19.5 487.5 Z" fill="#000"/><path d="M15 497.5 L18.3 503.5 L17 509 H13 L11.7 503.5Z" fill="#f2f2f8" stroke="#55556f" stroke-width="1"/><path d="M15 500 V506" stroke="#55556f" stroke-width=".9"/><path d="M11 510.8 H19" stroke="#222" stroke-width="1.8"/><path d="M25 508.0 L25 513.5 L19.5 513.5 Z" fill="#000"/><path d="M7 529.5 L13 523.5 L19 529.5 L13 536.5Z" fill="#fbfbfb" stroke="#8a5a20" stroke-width="1.2"/><path d="M8 530 H18.2 L13 536Z" fill="#d07c22"/><path d="M13 523.5 V520.5 M19 529.5 Q21.5 530.5 21 535" stroke="#444" stroke-width="1.1" fill="none"/><path d="M25 534.0 L25 539.5 L19.5 539.5 Z" fill="#000"/><path d="M9 553.5 L12.5 550 L16 553.5 L12.5 557Z" fill="#fbfbfb" stroke="#7a5a30" stroke-width="1.1"/><path d="M9.8 554 H15.3 L12.5 556.8Z" fill="#c66a20"/><path d="M12.5 550 V548" stroke="#444" stroke-width="1"/><path d="M14 562.5 L18.5 556 L20.5 562.5Z" fill="#e8b82e"/><path d="M25 559.5 L25 565 L19.5 565 Z" fill="#000"/></svg><div class="t" style="left:8px;top:391px;font-size:15px;font-weight:bold;color:#5c586c;font-family:'Noto Sans CJK SC',sans-serif">字</div>
<div class="red" style="left:0;top:440px;width:29.7px;height:26.5px;border-width:2.8px 3.4px 3.2px 3.7px"></div>
<div class="a" style="left:136.5px;top:453px;width:89.5px;height:16px;background:#ffffe1;border:1px solid #000"><div class="t" style="left:1.5px;top:1px;font-size:12px">交互式调和工具</div></div>
</body></html>
